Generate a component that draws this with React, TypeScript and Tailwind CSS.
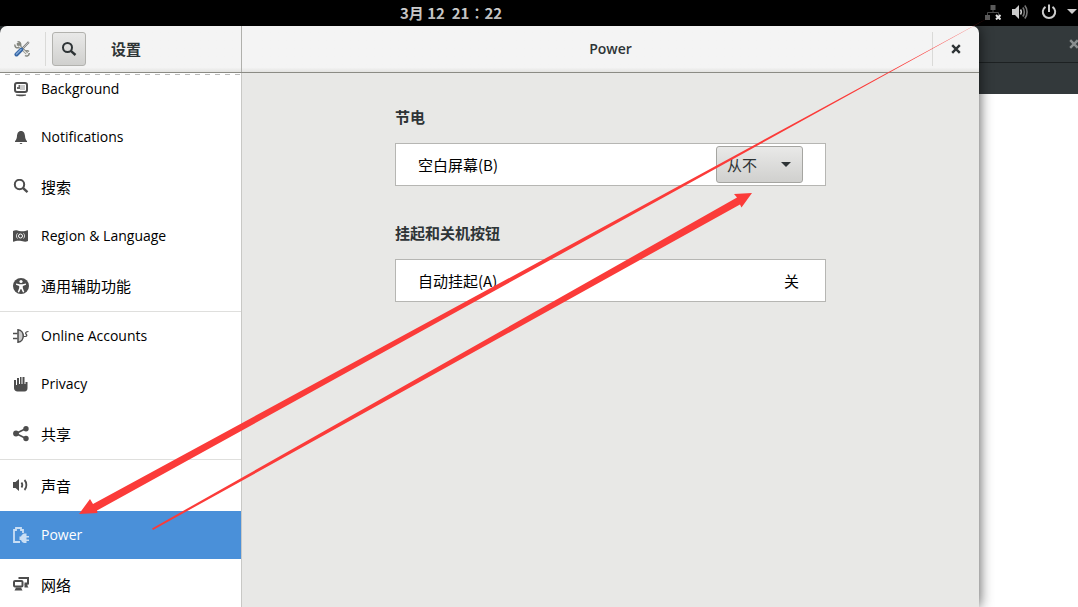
import { useState, type ReactNode } from "react";

type PanelId =
  | "background"
  | "notifications"
  | "search"
  | "region"
  | "accessibility"
  | "accounts"
  | "privacy"
  | "sharing"
  | "sound"
  | "power"
  | "network";

type Panel = {
  id: PanelId;
  label: string;
  cjk?: boolean;
  divider?: boolean;
  icon: ReactNode;
};

const PANELS: Panel[] = [
  {
    id: "background",
    label: "Background",
    icon: (
      <>
        <rect x="2" y="2" width="12" height="9" rx="2" fill="none" stroke="currentColor" strokeWidth="2" />
        <path d="M7 4h5v5H7z" opacity=".3" />
        <path d="M4 8V6h1.500V4H7v4z" opacity=".85" />
        <path d="M3 13.500h10v1c-2 1-8 1-10 0z" />
      </>
    ),
  },
  {
    id: "notifications",
    label: "Notifications",
    icon: <path d="M8 2C5 2 4.300 4.500 4 7c-.2 2.500-.8 4-2 5v1h12v-1c-1.200-1-1.800-2.500-2-5-.3-2.500-1-5-4-5zM6.500 14h3l-1 1h-1z" />,
  },
  {
    id: "search",
    label: "搜索",
    cjk: true,
    icon: (
      <>
        <circle cx="6.500" cy="5.500" r="4.700" fill="none" stroke="currentColor" strokeWidth="2" />
        <path d="M9.800 8.800l4.700 4.400" stroke="currentColor" strokeWidth="2.400" />
      </>
    ),
  },
  {
    id: "region",
    label: "Region & Language",
    icon: (
      <>
        <path d="M0 3c3-1.500 5 0 8 .3 3 .2 5-.6 7-1V13c-3 1.500-5 .2-8-.2-3-.2-5 .5-7 1z" />
        <g fill="none" stroke="#fff">
          <circle cx="7.500" cy="8" r="2" />
          <path d="M4.500 5.300c-1.400 1.500-1.400 3.700 0 5.200M10.500 5.300c1.400 1.500 1.400 3.700 0 5.200" strokeWidth=".8" />
        </g>
      </>
    ),
  },
  {
    id: "accessibility",
    label: "通用辅助功能",
    cjk: true,
    icon: (
      <>
        <circle cx="8" cy="8" r="8" />
        <circle cx="8" cy="3.500" r="1.600" fill="#fff" />
        <path d="M3 5.500l3.500.8h3L13 5.500v1.300L9.800 8v2l1.500 4-1.300.5L8.300 11h-.6L6 14.500 4.700 14l1.500-4V8L3 6.800z" fill="#fff" />
      </>
    ),
  },
  {
    id: "accounts",
    label: "Online Accounts",
    divider: true,
    icon: (
      <>
        <path d="M0 5.500h4.500M0 10.500h4.500" stroke="currentColor" strokeWidth="1.500" />
        <path d="M5 1.800c7 .5 7 11.900 0 12.400z" fill="#ccc" stroke="currentColor" strokeWidth="1.500" />
        <path d="M10.500 8.500H12c2.500 0 2-1.500 1-2.500S13 3.500 15.500 3.500" fill="none" stroke="currentColor" strokeWidth="1.200" />
      </>
    ),
  },
  {
    id: "privacy",
    label: "Privacy",
    icon: <path d="M1 4h2v5h1V2h2v6h1V1h1.500v7h1V1h2v7h1V6H14.500v6c0 2-1 3.500-3 3.500H4.500C2.500 15.500 1 14 1 12z" />,
  },
  {
    id: "sharing",
    label: "共享",
    cjk: true,
    icon: (
      <>
        <path d="M13 2.500l-10 5 10 5" fill="none" stroke="currentColor" strokeWidth="1.700" />
        <circle cx="13" cy="2.700" r="2.700" />
        <circle cx="3" cy="7.500" r="2.900" />
        <circle cx="13" cy="12.500" r="2.700" />
      </>
    ),
  },
  {
    id: "sound",
    label: "声音",
    cjk: true,
    divider: true,
    icon: (
      <>
        <path d="M0 4h2.500L6 1v12l-3.500-3H0z" />
        <path d="M8.500 4.500c1 1.500 1 3.500 0 5M11.500 2c2.500 2.500 2.500 7.500 0 10" fill="none" stroke="currentColor" strokeWidth="1.800" />
      </>
    ),
  },
  {
    id: "power",
    label: "Power",
    icon: (
      <>
        <path d="M7 15H1V3h2V1h5v2h2v3" fill="none" stroke="currentColor" strokeWidth="1.800" />
        <path d="M8 9.500C8.500 8 9.500 7 11 6.500h2.500V9H16v1.500h-2.500v2H16V14h-2.500v2H11c-1.500-.3-2.500-1.500-3-3H6.500V9.500z" />
      </>
    ),
  },
  {
    id: "network",
    label: "网络",
    cjk: true,
    icon: (
      <>
        <rect x="1" y="4" width="8.500" height="5.500" rx="1" fill="none" stroke="currentColor" strokeWidth="2" />
        <path d="M3 10.500h5l1.500 3H1.500z" />
        <path d="M6.500 2V1H15v5.500h-3.500" fill="none" stroke="currentColor" strokeWidth="2" />
        <path d="M11.500 7h3v2l1 1.500h-4z" />
      </>
    ),
  },
];

function Icon({ children, className = "" }: { children: ReactNode; className?: string }) {
  return (
    <svg viewBox="0 0 16 16" fill="currentColor" aria-hidden="true" className={`size-4 shrink-0 ${className}`}>
      {children}
    </svg>
  );
}

function CloseIcon({ className = "" }: { className?: string }) {
  return (
    <Icon className={className}>
      <path d="M4.200 4.200l7.600 7.600M11.800 4.200l-7.600 7.600" stroke="currentColor" strokeWidth="2.400" />
    </Icon>
  );
}

function ToolsIcon() {
  return (
    <Icon>
      <path d="M2.800 3.300l2.700-.1.500 2.500 7 6.800" fill="none" stroke="#85877f" strokeWidth="2.800" />
      <path d="M1 3.500C.5 6 2.500 7.500 5 6.500M3.500.8C6 .5 7.200 2.500 6.500 5M11 14.500c1.500 1.200 4 .5 4.300-2.500M11 11c1-1.500 2.800-1.500 4-.5" fill="none" stroke="#85877f" strokeWidth="1.500" />
      <path d="M5 5l8 7.800" stroke="#e6e6e1" strokeWidth="1.200" />
      <path d="M14.800 1L8.500 7.500" stroke="#77797a" strokeWidth="2.200" />
      <path d="M14.500 1.300L8.500 7.500" stroke="#dcdcd8" strokeWidth=".8" />
      <path d="M7.300 8.700l-4.800 4.800" stroke="#3465a4" strokeWidth="4" strokeLinecap="round" />
      <path d="M7 8.500L2.500 13" stroke="#7fa6d6" strokeWidth="1.600" strokeLinecap="round" />
    </Icon>
  );
}

function TopBar() {
  return (
    <header className="flex h-[26px] shrink-0 items-center justify-between overflow-hidden bg-black text-[#cccccc]">
      <time className="ml-100 text-[15px] font-bold whitespace-pre">{"3月 12  21∶22"}</time>
      <div className="flex items-center pb-0.5">
        <Icon className="mr-[11px]">
          <path d="M5.500 1h5v5h-5zM0 11h5v5H0z" fill="#5a5a5a" />
          <path d="M8 6v3M2.500 11V8.500h11V11" fill="none" stroke="#4a4a4a" />
          <path d="M11 11l4.500 4.500M15.500 11L11 15.500" stroke="#e0e0e0" strokeWidth="2" />
        </Icon>
        <Icon className="mr-[13px]">
          <path d="M0 5h3l4-4v14l-4-4H0z" />
          <path d="M8.500 5.500c1 1.500 1 3.500 0 5" fill="none" stroke="currentColor" strokeWidth="1.500" />
          <path d="M10.800 3.500c2 2.500 2 6.500 0 9M12.800 1.500c3 3.500 3 9.500 0 13" fill="none" stroke="#777" strokeWidth="1.600" />
        </Icon>
        <Icon className="mr-[9px]">
          <path d="M4.500 2.800a6.200 6.200 0 1 0 7 0M8 .5V8" fill="none" stroke="currentColor" strokeWidth="2" />
        </Icon>
        <svg viewBox="0 0 12 6" className="h-[6px] w-3 shrink-0" fill="currentColor" aria-hidden="true">
          <path d="M1 0h10L6 5z" />
        </svg>
      </div>
    </header>
  );
}

function Sidebar({ active, onSelect }: { active: PanelId; onSelect: (id: PanelId) => void }) {
  return (
    <nav className="relative w-[242px] shrink-0 overflow-hidden border-r border-[#c8c8c5] bg-white">
      <div className="absolute inset-x-0 top-px h-px bg-[repeating-linear-gradient(to_right,transparent_0_5px,#bbbbbb_5px_10px)]" />
      <ul className="-mt-2">
        {PANELS.map((p) => (
          <li key={p.id} className={p.divider ? "border-t border-[#dfdfdd]" : ""}>
            <button
              onClick={() => onSelect(p.id)}
              className={`flex w-full items-center gap-3 pl-[13px] text-left ${
                p.cjk ? "h-[51px] text-[15px]" : "h-12 font-['Open_Sans',sans-serif] text-sm"
              } ${active === p.id ? "bg-[#4a90d9] text-white" : "text-black"}`}
            >
              <Icon className={active === p.id ? "text-[#c9def4]" : "text-[#4d4d4d]"}>{p.icon}</Icon>
              <span className={p.cjk ? "pt-0.5" : ""}>{p.label}</span>
            </button>
          </li>
        ))}
      </ul>
    </nav>
  );
}

function PowerPanel() {
  const [blank, setBlank] = useState("从不");

  return (
    <main className="flex-1 bg-[#e8e8e6] pt-8">
      <div className="mx-auto flex w-[431px] max-w-full flex-col gap-[35px] text-[15px]">
        <section>
          <h2 className="leading-6 font-bold text-[#2e3436]">节电</h2>
          <div className="mt-3.5 flex h-[43px] items-center justify-between border border-[#b6b6b3] bg-white px-[22px]">
            <label htmlFor="blank-screen" className="pt-0.5">空白屏幕(B)</label>
            <div className="relative">
              <select
                id="blank-screen"
                value={blank}
                onChange={(e) => setBlank(e.target.value)}
                className="block h-[37px] w-[87px] appearance-none rounded-[3px] border border-[#a5a5a1] bg-linear-to-b from-[#e9e9e8] to-[#d0d0ce] pt-0.5 pl-2.5 text-[#2e3436]"
              >
                <option>从不</option>
                <option>5 分钟</option>
                <option>10 分钟</option>
              </select>
              <svg viewBox="0 0 10 5" className="pointer-events-none absolute top-4 right-3 h-[5px] w-2.5" fill="#2e3436" aria-hidden="true">
                <path d="M0 0h10L5 5z" />
              </svg>
            </div>
          </div>
        </section>
        <section>
          <h2 className="leading-6 font-bold text-[#2e3436]">挂起和关机按钮</h2>
          <button className="mt-3.5 flex h-[43px] w-full items-center justify-between border border-[#b6b6b3] bg-white pt-0.5 pr-[26px] pl-[22px]">
            <span>自动挂起(A)</span>
            <span>关</span>
          </button>
        </section>
      </div>
    </main>
  );
}

function Arrows() {
  return (
    <svg viewBox="0 0 1078 607" width="1078" height="607" fill="#fb3b39" aria-hidden="true" className="pointer-events-none absolute top-0 left-0 z-20">
      <path d="M79 514L90 499L93 504L990 17L97 510.500L97.500 513z" />
      <path d="M752 193L734 194L737 197.500L152 528.500L153 530L740 204.500L741.500 207.500z" />
    </svg>
  );
}

export default function App() {
  const [active, setActive] = useState<PanelId>("power");

  return (
    <div className="relative flex h-screen flex-col overflow-hidden bg-black font-['Noto_Sans_CJK_SC','Noto_Sans',sans-serif]">
      <TopBar />
      <div className="flex min-h-0 flex-1 bg-[linear-gradient(#33393b_68px,#ffffff_68px)]">
        <div className="z-10 flex min-w-0 flex-1 flex-col overflow-hidden rounded-t-[7px] shadow-[0_0_14px_rgba(0,0,0,0.7)]">
          <div className="flex h-[47px] shrink-0 border-b border-[#8b8b84] bg-linear-to-b from-[#f4f4f4] from-90% to-[#e3e3e1] text-[15px] font-bold text-[#2e3436]">
            <div className="flex w-[242px] shrink-0 items-center border-r border-[#b0b0ac] pl-3.5">
              <ToolsIcon />
              <div className="mr-1.5 ml-[15px] h-[34px] w-px bg-[#dadad8]" />
              <button aria-label="Search" className="grid size-[34px] place-items-center rounded-[3px] border border-[#b2b2ae] bg-linear-to-b from-[#e9e9e8] to-[#d0d0ce]">
                <Icon>
                  <circle cx="6.500" cy="6.500" r="4.500" fill="none" stroke="currentColor" strokeWidth="2" />
                  <path d="M9.800 9.800l4.700 4.200" stroke="currentColor" strokeWidth="2.400" />
                </Icon>
              </button>
              <h1 className="ml-[25px]">设置</h1>
            </div>
            <div className="grid flex-1 grid-cols-[47px_1fr_47px] items-center">
              <h2 className="col-start-2 text-center font-['Open_Sans',sans-serif] text-sm font-semibold">Power</h2>
              <div className="flex h-[34px] items-center justify-center border-l border-[#dadad8]">
                <button aria-label="Close">
                  <CloseIcon />
                </button>
              </div>
            </div>
          </div>
          <div className="flex min-h-0 flex-1">
            <Sidebar active={active} onSelect={setActive} />
            <PowerPanel />
          </div>
        </div>
        <div className="flex w-[99px] shrink-0 flex-col overflow-hidden">
          <div className="flex h-[37px] justify-end border-b border-[#1d2122]">
            <button aria-label="Close window" className="-mr-1 text-[#8b8f90]">
              <CloseIcon />
            </button>
          </div>
        </div>
      </div>
      <Arrows />
    </div>
  );
}
